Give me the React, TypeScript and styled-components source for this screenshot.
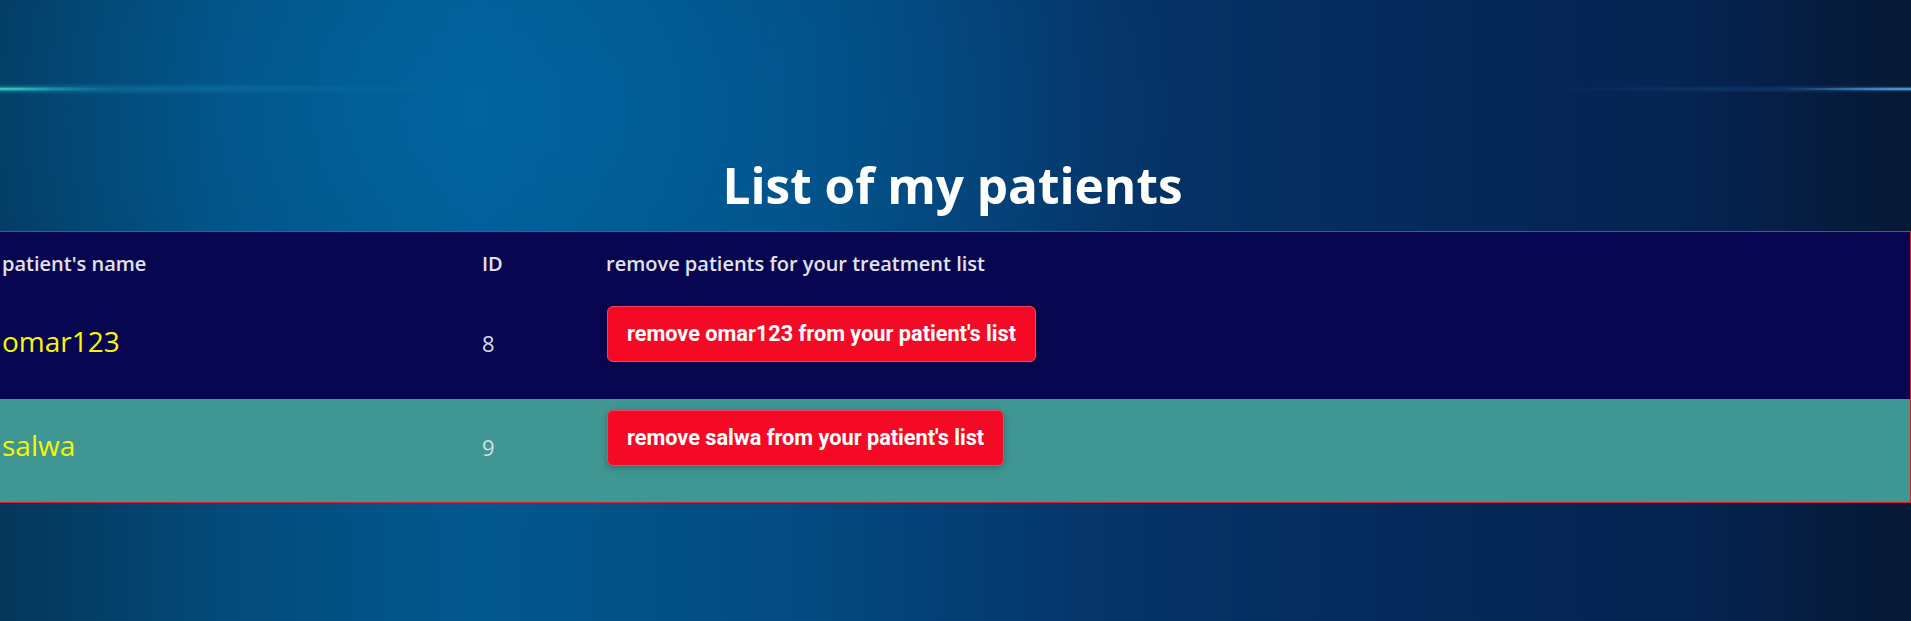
import React from "react";
import styled, { createGlobalStyle } from "styled-components";

const GlobalStyle = createGlobalStyle`
  html, body {
    margin: 0;
    padding: 0;
  }
  body {
    font-family: "Open Sans", "Liberation Sans", sans-serif;
    background: #04325a;
  }
`;

const Page = styled.main`
  min-height: 621px;
  box-sizing: border-box;
  padding-top: 150px;
  background:
    radial-gradient(ellipse 110px 3px at 0px 89px, rgba(80, 235, 170, 0.95), rgba(40, 190, 190, 0.45) 50%, rgba(0, 0, 0, 0) 100%),
    radial-gradient(ellipse 460px 6px at 0px 89px, rgba(30, 160, 200, 0.4), rgba(0, 0, 0, 0) 100%),
    radial-gradient(ellipse 130px 2px at 100% 89px, rgba(100, 195, 255, 0.9), rgba(0, 0, 0, 0) 100%),
    radial-gradient(ellipse 380px 4px at 100% 89px, rgba(40, 120, 200, 0.35), rgba(0, 0, 0, 0) 100%),
    radial-gradient(ellipse 700px 420px at 480px 110px, rgba(0, 112, 176, 0.5), rgba(0, 112, 176, 0) 100%),
    linear-gradient(to right, #04365a 0%, #034b7b 12%, #02588e 25%, #034a80 42%, #053468 58%, #05295a 75%, #052452 88%, #061834 100%);
`;

const Title = styled.h1`
  margin: 0 0 11px;
  padding-right: 6px;
  text-align: center;
  font-family: "Open Sans", "Liberation Sans", sans-serif;
  font-weight: 700;
  font-size: 49.5px;
  line-height: 70px;
  color: #ffffff;
`;

const Table = styled.table`
  width: 100%;
  border-collapse: collapse;
  table-layout: fixed;
  background: #080650;
  border-top: 1px solid #d3222c;
  border-right: 1px solid #d3222c;
  border-bottom: 1px solid #d3222c;
`;

const HeadRow = styled.tr`
  height: 63px;
`;

const HeadCell = styled.th<{ $w?: number; $pl?: number }>`
  ${(p) => (p.$w ? `width: ${p.$w}px;` : "")}
  padding: 0 0 0 ${(p) => p.$pl ?? 0}px;
  text-align: left;
  vertical-align: middle;
  font-family: "Open Sans", "Liberation Sans", sans-serif;
  font-weight: 600;
  font-size: 20px;
  color: #e2e2e8;
  white-space: nowrap;
`;

const BodyRow = styled.tr<{ $alt?: boolean }>`
  height: 104px;
  background: ${(p) => (p.$alt ? "#3f9693" : "#080650")};
`;

const NameCell = styled.td`
  padding: 27px 0 0 2px;
  vertical-align: baseline;
  font-family: "Open Sans", "Liberation Sans", sans-serif;
  font-size: 28px;
  color: #f8f800;
`;

const IdCell = styled.td`
  padding: 0;
  vertical-align: baseline;
  font-family: "Open Sans", "Liberation Sans", sans-serif;
  font-size: 22px;
  color: #dcdce4;
`;

const ActionCell = styled.td`
  padding: 11px 0 0 1px;
  vertical-align: top;
`;

const RemoveButton = styled.button`
  box-sizing: border-box;
  height: 56px;
  padding: 0 19px;
  border: 1px solid #ec4660;
  border-radius: 6px;
  background: #f50a25;
  color: #ffffff;
  font-family: Roboto, "Liberation Sans", sans-serif;
  font-weight: 700;
  font-size: 21.7px;
  line-height: 24px;
  box-shadow: 0 2px 6px rgba(0, 0, 0, 0.25);
  cursor: pointer;
  white-space: nowrap;
`;

type Patient = { name: string; id: number };

const patients: Patient[] = [
  { name: "omar123", id: 8 },
  { name: "salwa", id: 9 },
];

export default function App() {
  return (
    <>
      <GlobalStyle />
      <Page>
        <Title>List of my patients</Title>
        <Table>
          <thead>
            <HeadRow>
              <HeadCell $w={480} $pl={2}>
                patient's name
              </HeadCell>
              <HeadCell $w={124}>ID</HeadCell>
              <HeadCell>remove patients for your treatment list</HeadCell>
            </HeadRow>
          </thead>
          <tbody>
            {patients.map((p, i) => (
              <BodyRow key={p.id} $alt={i % 2 === 1}>
                <NameCell>{p.name}</NameCell>
                <IdCell>{p.id}</IdCell>
                <ActionCell>
                  <RemoveButton>remove {p.name} from your patient's list</RemoveButton>
                </ActionCell>
              </BodyRow>
            ))}
          </tbody>
        </Table>
      </Page>
    </>
  );
}
